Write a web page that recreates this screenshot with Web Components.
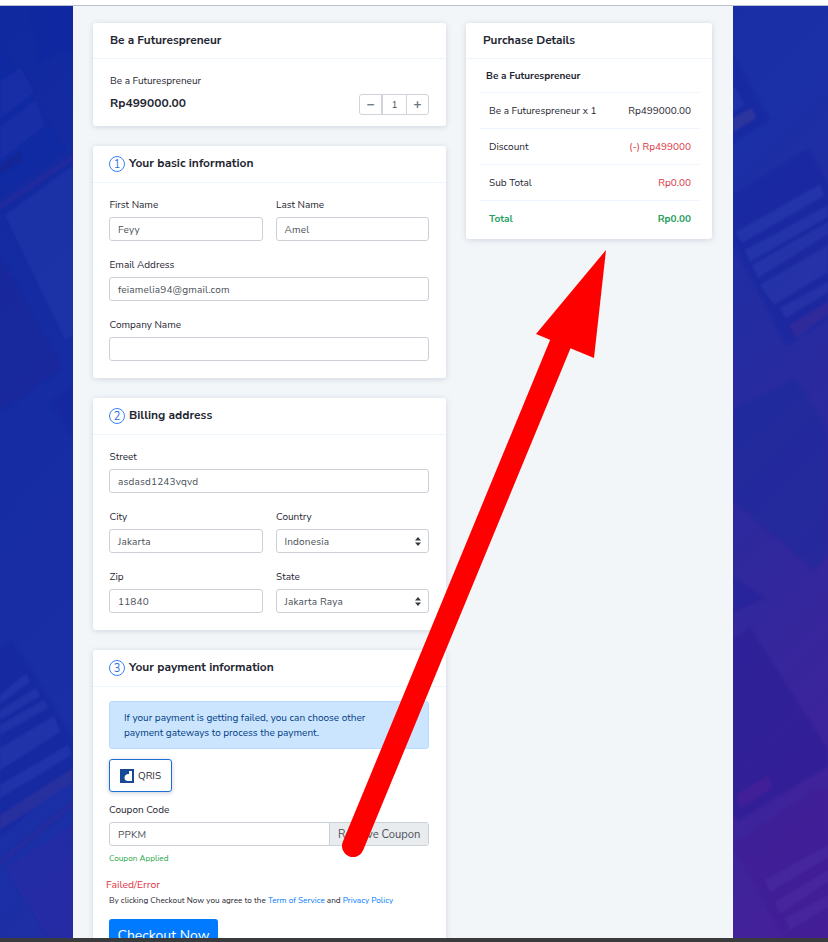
<!DOCTYPE html>
<html>
<head>
<meta charset="utf-8">
<title>Checkout</title>
<style>
  html, body { margin: 0; padding: 0; height: 100%; overflow: hidden; }
  body { font-family: "Nunito Sans", "Open Sans", "Noto Sans", sans-serif; background: #fff; }
</style>
</head>
<body>

<checkout-page>
  <div slot="main">
    <plain-card heading="Be a Futurespreneur">
      <product-row name="Be a Futurespreneur" price="Rp499000.00" qty="1"></product-row>
    </plain-card>

    <plain-card step="1" heading="Your basic information">
      <form-grid>
        <form-field label="First Name" value="Feyy"></form-field>
        <form-field label="Last Name" value="Amel"></form-field>
        <form-field wide label="Email Address" value="feiamelia94@gmail.com"></form-field>
        <form-field wide label="Company Name" value=""></form-field>
      </form-grid>
    </plain-card>

    <plain-card step="2" heading="Billing address">
      <form-grid>
        <form-field wide label="Street" value="asdasd1243vqvd"></form-field>
        <form-field label="City" value="Jakarta"></form-field>
        <form-field select label="Country" value="Indonesia"></form-field>
        <form-field label="Zip" value="11840"></form-field>
        <form-field select label="State" value="Jakarta Raya"></form-field>
      </form-grid>
    </plain-card>

    <plain-card step="3" heading="Your payment information" last>
      <payment-block></payment-block>
    </plain-card>
  </div>

  <div slot="side">
    <plain-card heading="Purchase Details" flush>
      <summary-list>
        <summary-row kind="name" label="Be a Futurespreneur"></summary-row>
        <summary-row label="Be a Futurespreneur x 1" value="Rp499000.00"></summary-row>
        <summary-row kind="red" label="Discount" value="(-) Rp499000"></summary-row>
        <summary-row kind="red" label="Sub Total" value="Rp0.00"></summary-row>
        <summary-row kind="total" label="Total" value="Rp0.00"></summary-row>
      </summary-list>
    </plain-card>
  </div>
</checkout-page>

<script>
// blurred mock-up pages behind the sheet
class BackdropArt extends HTMLElement {
  constructor() {
    super();
    this.attachShadow({mode: 'open'}).innerHTML = `
      <style>
        :host { display: block; position: absolute; left: 0; top: 0; width: 828px; height: 932px;
          background: linear-gradient(135deg, #11299f 0%, #1b2fa6 50%, #2a2a9e 68%, #47209a 100%); }
        svg { display: block; }
      </style>
      <svg width="828" height="932" viewBox="0 6 828 932">
        <defs><filter id="soft"><feGaussianBlur stdDeviation="1"/></filter></defs>
        <g filter="url(#soft)" opacity=".55">
          <!-- left strip -->
          <polygon points="28,10 45,6 74,6 74,55 60,50 38,65 36,35" fill="#0f28a0"/>
          <polygon points="0,50 65,150 0,195" fill="#1129a4"/>
          <polygon points="0,82 20,68 34,92 0,118" fill="#1c33ae"/>
          <polygon points="0,128 36,100 44,126 0,160" fill="#1c33ae"/>
          <polygon points="0,165 20,152 22,160 0,175" fill="#14248e"/>
          <polygon points="74,153 74,160 0,210 0,203" fill="#2b2a9c"/>
          <polygon points="74,165 5,215 65,340 74,335" fill="#2238ac"/>
          <polygon points="0,255 62,368 0,412" fill="#1b2799"/>
          <polygon points="50,403 74,385 74,440" fill="#12289f"/>
          <polygon points="13,640 73,738 73,770 0,838 0,648" fill="#14269f"/>
          <polygon points="0,695 26,673 30,682 0,704" fill="#2538ae"/>
          <polygon points="0,710 36,688 40,696 0,720" fill="#2538ae"/>
          <polygon points="0,725 44,700 48,708 0,735" fill="#2538ae"/>
          <polygon points="0,748 54,716 60,732 0,770" fill="#2538ae"/>
          <polygon points="0,785 68,745 72,755 0,798" fill="#2538ae"/>
          <polygon points="0,815 73,768 73,782 0,830" fill="#33309a"/>
          <polygon points="73,800 73,808 0,866 0,858" fill="#2a2a9c"/>
          <polygon points="73,825 5,868 50,938 73,938" fill="#2a2aa4"/>
          <!-- right strip -->
          <polygon points="733,55 770,120 733,143" fill="#1428a0"/>
          <polygon points="733,85 745,105 733,112" fill="#2236ac"/>
          <polygon points="733,118 752,108 756,118 733,132" fill="#3a3a98"/>
          <polygon points="733,195 808,149 828,183 828,318 786,346 733,243" fill="#1626a0"/>
          <polygon points="736,232 820,184 824,196 742,243" fill="#2538ae"/>
          <polygon points="745,250 828,205 828,217 750,262" fill="#2538ae"/>
          <polygon points="752,265 828,222 828,234 758,278" fill="#2538ae"/>
          <polygon points="760,285 828,245 828,272 774,305" fill="#2538ae"/>
          <polygon points="780,308 828,282 828,292 786,318" fill="#2538ae"/>
          <polygon points="790,325 828,302 828,314 796,338" fill="#382c98"/>
          <polygon points="733,410 795,378 828,430 828,555 815,570 733,500" fill="#1e2a9c"/>
          <polygon points="733,578 765,598 733,612" fill="#24229a"/>
          <polygon points="733,640 750,628 828,750 828,766 738,821 733,815" fill="#2a1c94"/>
          <polygon points="736,795 768,776 772,788 740,808" fill="#451a96"/>
          <polygon points="733,845 815,790 828,790 828,938 785,938" fill="#3f1a94"/>
          <polygon points="765,880 828,845 828,857 770,892" fill="#4a2aa0"/>
          <polygon points="775,902 828,870 828,882 780,914" fill="#4a2aa0"/>
          <polygon points="785,918 828,895 828,907 790,930" fill="#4a2aa0"/>
        </g>
      </svg>
    `;
  }
}
customElements.define('backdrop-art', BackdropArt);

class CheckoutPage extends HTMLElement {
  constructor() {
    super();
    this.attachShadow({mode: 'open'}).innerHTML = `
      <style>
        :host { display: block; position: relative; width: 828px; height: 942px; overflow: hidden; }
        .top { height: 5px; background: #fff; border-bottom: 1px solid #b9c0d0; }
        .stage { position: relative; height: 932px; padding-left: 73px; box-sizing: border-box; display: flex; }
        .sheet {
          position: relative; width: 660px; background: #f3f6f9;
          display: flex; gap: 20px; padding: 17px 21px 0 20px; box-sizing: border-box; overflow: hidden;
        }
        .main { width: 353px; flex: none; }
        .side { width: 246px; flex: none; }
        .bar { height: 4px; background: #3a3b3d; }
        svg.arrow { position: absolute; left: 0; top: 0; pointer-events: none; }
      </style>
      <div class="top"></div>
      <div class="stage">
        <backdrop-art></backdrop-art>
        <div class="sheet">
          <div class="main"><slot name="main"></slot></div>
          <div class="side"><slot name="side"></slot></div>
        </div>
      </div>
      <div class="bar"></div>
      <svg class="arrow" width="828" height="942" viewBox="0 0 828 942">
        <path d="M353 846 L562 340" stroke="#ff0000" stroke-width="22" stroke-linecap="round" fill="none"/>
        <path d="M606 250 L536 334 L594 358 Z" fill="#ff0000"/>
      </svg>
    `;
  }
}
customElements.define('checkout-page', CheckoutPage);

class PlainCard extends HTMLElement {
  constructor() {
    super();
    const step = this.getAttribute('step');
    const heading = this.getAttribute('heading');
    this.attachShadow({mode: 'open'}).innerHTML = `
      <style>
        :host {
          display: block; background: #fff; border-radius: 3px; margin-bottom: 20px;
          box-shadow: 0 1px 6px rgba(30, 50, 90, .16);
        }
        :host([last]) { margin-bottom: 0; }
        .head {
          height: 33px; padding: 0 17px 2px; display: flex; align-items: center; gap: 4px;
          border-bottom: 1px solid #edf4fc; font-size: 11.8px; font-weight: 700; color: #1f2733;
        }
        :host([step]) .head { height: 36px; padding: 0 17px 0 16px; font-size: 12px; }
        :host([step]) .head .t { margin-bottom: 2px; }
        .num {
          width: 14px; height: 14px; border: 1px solid #3b82f6; border-radius: 50%;
          display: flex; align-items: center; justify-content: center;
          font-size: 11px; font-weight: 400; color: #2f6fdc; flex: none;
        }
        .body { padding: 14px 17px 17px 16px; }
        :host(:not([step]):not([flush])) .body { padding: 15px 17px 11px; }
        :host([flush]) .body { padding: 0 13px; }
      </style>
      <div class="head">${step ? `<span class="num">${step}</span>` : ''}<span class="t">${heading}</span></div>
      <div class="body"><slot></slot></div>
    `;
  }
}
customElements.define('plain-card', PlainCard);

class ProductRow extends HTMLElement {
  constructor() {
    super();
    this.attachShadow({mode: 'open'}).innerHTML = `
      <style>
        :host { display: flex; justify-content: space-between; align-items: flex-end; font-size: 10px; color: #1f2733; }
        .name { line-height: 15px; }
        .price { font-size: 12px; font-weight: 700; line-height: 18px; margin: 5px 0 3px; }
        .qty { display: flex; height: 21px; box-sizing: border-box; border: 1px solid #cfd4da; border-radius: 3px; color: #495057; }
        .qty span { display: flex; align-items: center; justify-content: center; width: 21px; }
        .qty .n { width: 23px; border-left: 2px solid #cfd4da; border-right: 1px solid #cfd4da; }
        .qty b { font-size: 14px; color: #6c757d; }
      </style>
      <div>
        <div class="name">${this.getAttribute('name')}</div>
        <div class="price">${this.getAttribute('price')}</div>
      </div>
      <div class="qty"><span><b>&minus;</b></span><span class="n">${this.getAttribute('qty')}</span><span><b>+</b></span></div>
    `;
  }
}
customElements.define('product-row', ProductRow);

class FormGrid extends HTMLElement {
  constructor() {
    super();
    this.attachShadow({mode: 'open'}).innerHTML = `
      <style>
        :host { display: grid; grid-template-columns: 1fr 1fr; column-gap: 13px; row-gap: 16px; }
      </style>
      <slot></slot>
    `;
  }
}
customElements.define('form-grid', FormGrid);

class FormField extends HTMLElement {
  constructor() {
    super();
    const isSelect = this.hasAttribute('select');
    this.attachShadow({mode: 'open'}).innerHTML = `
      <style>
        :host { display: block; font-size: 10px; color: #1f2733; min-width: 0; }
        :host([wide]) { grid-column: 1 / 3; }
        label { display: block; line-height: 15px; padding: 1px 0 0 .5px; margin-bottom: 4px; }
        .box {
          height: 24px; box-sizing: border-box; border: 1px solid #ccd1d8; border-radius: 3px; padding: 2px 8px 0;
          display: flex; align-items: center; justify-content: space-between; color: #495057; letter-spacing: .18px;
        }
        svg { flex: none; margin: -2px -1px 0 0; }
      </style>
      <label>${this.getAttribute('label')}</label>
      <div class="box"><span>${this.getAttribute('value')}</span>${isSelect ? `
        <svg width="6" height="9" viewBox="0 0 6 9"><path d="M3 0 L6 3.4 H0 Z M3 9 L6 5.6 H0 Z" fill="#343a40"/></svg>` : ''}</div>
    `;
  }
}
customElements.define('form-field', FormField);

class PaymentBlock extends HTMLElement {
  constructor() {
    super();
    this.attachShadow({mode: 'open'}).innerHTML = `
      <style>
        :host { display: block; font-size: 10px; color: #1f2733; }
        .note {
          background: #cce5ff; border: 1px solid #b8daff; border-radius: 3px; color: #004085;
          padding: 2px 50px 0 14px; line-height: 15px; height: 48px; box-sizing: border-box;
          display: flex; align-items: center;
        }
        .gateway {
          margin-top: 10px; width: 63px; height: 33px; box-sizing: border-box; border: 1px solid #1d6fd8; border-radius: 3px;
          display: flex; align-items: center; gap: 4px; padding-left: 10px;
          box-shadow: 0 1px 4px rgba(30,50,90,.25);
        }
        .coupon-label { line-height: 15px; margin-top: 11px; }
        .coupon { display: flex; height: 24px; box-sizing: border-box; margin-top: 4px; border: 1px solid #ccd1d8; border-radius: 3px; }
        .coupon .val { flex: 1; padding: 2px 8px 0; display: flex; align-items: center; color: #495057; letter-spacing: .18px; }
        .coupon .btn { width: 99px; box-sizing: border-box; padding-left: 8px; background: #e9ecef; border-left: 1px solid #ccd1d8; display: flex; align-items: center; color: #495057; font-size: 11.2px; white-space: nowrap; }
        .ok { color: #28a745; font-size: 8.2px; line-height: 12px; margin-top: 7px; }
        .fail { color: #dc3545; margin: 12px 0 0 -3px; line-height: 15px; font-size: 10.4px; }
        .terms { font-size: 8.2px; line-height: 12px; margin-top: 3px; }
        .terms a { color: #007bff; text-decoration: none; }
        .cta {
          margin-top: 12px; width: 109px; height: 38px; background: #007bff; color: #fff; border-radius: 3px;
          font-size: 14px; line-height: 21px; padding-top: 6px; box-sizing: border-box; text-align: center;
        }
      </style>
      <div class="note"><span>If your payment is getting failed, you can choose other payment gateways to process the payment.</span></div>
      <div class="gateway">
        <svg width="14" height="14" viewBox="0 0 14 14"><rect width="14" height="14" fill="#164a94"/><path d="M9 5 C6 5 4.5 6.5 4.5 9 C4.5 11 6 12 8 12 H12 V2 H9 Z" fill="#fff"/></svg>
        <span>QRIS</span>
      </div>
      <div class="coupon-label">Coupon Code</div>
      <div class="coupon"><div class="val">PPKM</div><div class="btn">Remove Coupon</div></div>
      <div class="ok">Coupon Applied</div>
      <div class="fail">Failed/Error</div>
      <div class="terms">By clicking Checkout Now you agree to the <a>Term of Service</a> and <a>Privacy Policy</a></div>
      <div class="cta">Checkout Now</div>
    `;
  }
}
customElements.define('payment-block', PaymentBlock);

class SummaryList extends HTMLElement {
  constructor() {
    super();
    this.attachShadow({mode: 'open'}).innerHTML = `
      <style>:host { display: block; }</style>
      <slot></slot>
    `;
  }
}
customElements.define('summary-list', SummaryList);

class SummaryRow extends HTMLElement {
  constructor() {
    super();
    const value = this.getAttribute('value');
    this.attachShadow({mode: 'open'}).innerHTML = `
      <style>
        :host {
          display: flex; justify-content: space-between; align-items: center; height: 35px; padding: 0 8px 0 10px;
          border-bottom: 1px solid #edf4fc; font-size: 10px; color: #1f2733;
        }
        :host(:last-child) { border-bottom: 0; height: 36px; padding-bottom: 2px; }
        :host([kind="name"]) { padding-left: 7px; font-weight: 700; height: 33px; }
        :host([kind="red"]) .v { color: #dc3545; }
        :host([kind="total"]) { color: #28a060; font-weight: 700; }
      </style>
      <span>${this.getAttribute('label')}</span>${value ? `<span class="v">${value}</span>` : ''}
    `;
  }
}
customElements.define('summary-row', SummaryRow);
</script>
</body>
</html>
